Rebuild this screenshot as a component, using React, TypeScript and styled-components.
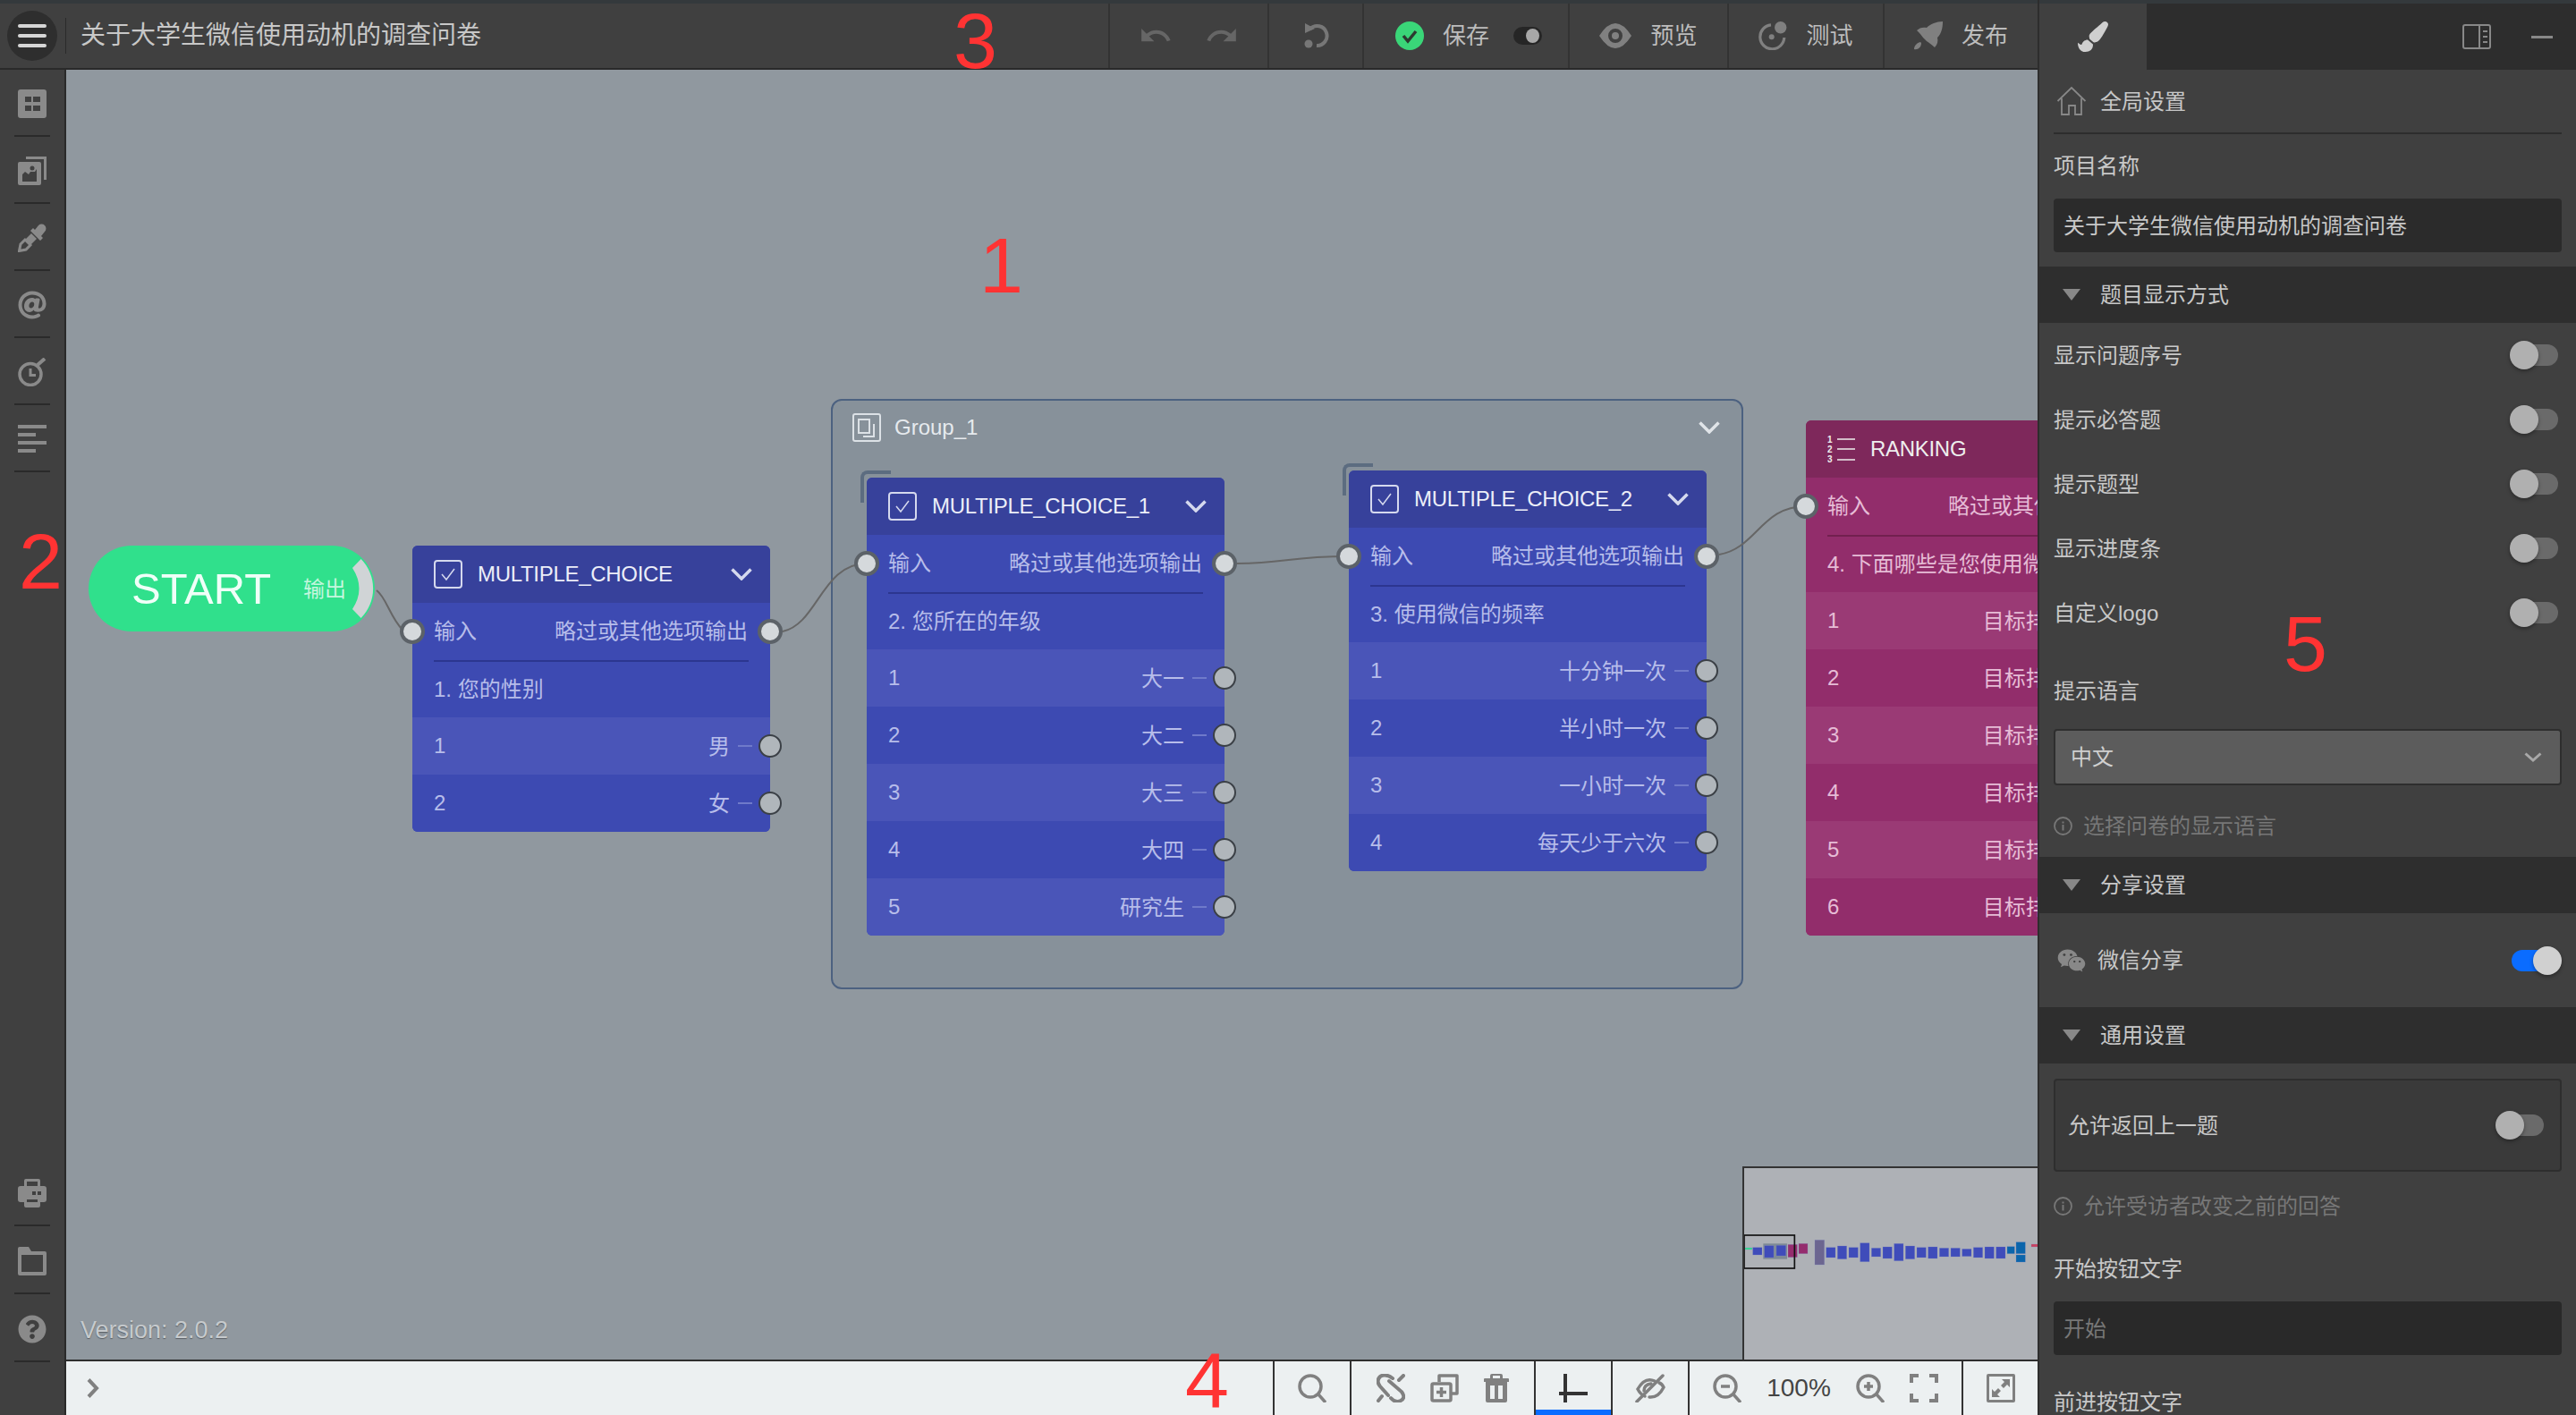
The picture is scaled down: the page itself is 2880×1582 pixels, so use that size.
import React from "react";
import styled, { createGlobalStyle } from "styled-components";
import { FaAt, FaQuestionCircle, FaPaintBrush, FaWeixin } from "react-icons/fa";
import { MdUndo, MdRedo } from "react-icons/md";

const Global = createGlobalStyle`
  html, body { margin: 0; padding: 0; overflow: hidden; background: #404040; }
  * { box-sizing: border-box; }
  #root { width: 2880px; height: 1582px; font-family: "Liberation Sans", "Noto Sans CJK SC", sans-serif; }
`;

const Shell = styled.div`
  position: relative;
  display: flex;
  width: 2880px;
  height: 1582px;
  overflow: hidden;
`;
const Left = styled.div`
  display: flex;
  flex-direction: column;
  width: 2278px;
  flex: none;
`;
const TopBar = styled.header`
  display: flex;
  align-items: stretch;
  height: 78px;
  flex: none;
  background: #404040;
  border-top: 4px solid #34393c;
  border-bottom: 2px solid #2a2a2a;
`;
const MenuButton = styled.div`
  width: 56px;
  height: 56px;
  margin: 8px 0 0 8px;
  border-radius: 50%;
  background: #2e2e2e;
  display: flex;
  flex-direction: column;
  align-items: center;
  justify-content: center;
  gap: 7px;
  flex: none;
`;
const MenuLine = styled.span`
  width: 32px;
  height: 4px;
  border-radius: 2px;
  background: #d6d6d6;
`;
const TitleDivider = styled.span`
  width: 1px;
  height: 40px;
  margin: 16px 0 0 9px;
  background: #2a2a2a;
  flex: none;
`;
const Title = styled.div`
  flex: 1;
  margin-left: 16px;
  font-size: 28px;
  line-height: 72px;
  color: #c8c8c8;
`;
const ToolSection = styled.div<{ $w: number; $offset?: number }>`
  width: ${(p) => p.$w}px;
  padding-left: ${(p) => p.$offset ?? 0}px;
  flex: none;
  display: flex;
  align-items: center;
  justify-content: center;
  border-left: 2px solid #333;
`;
const ToolIcons = styled.div<{ $gap: number }>`
  display: flex;
  align-items: center;
  gap: ${(p) => p.$gap}px;
`;
const ToolLabel = styled.span`
  font-size: 26px;
  line-height: 32px;
  color: #bcbcbc;
`;
const MiniSwitch = styled.span`
  position: relative;
  display: block;
  width: 32px;
  height: 20px;
  border-radius: 10px;
  background: #262626;
  margin-left: 6px;
  &::after {
    content: "";
    position: absolute;
    right: 3px;
    top: 2px;
    width: 15px;
    height: 16px;
    border-radius: 50%;
    background: #a8a8a8;
  }
`;

const Middle = styled.div`
  flex: 1;
  display: flex;
  min-height: 0;
`;
const Sidebar = styled.nav`
  width: 74px;
  flex: none;
  display: flex;
  flex-direction: column;
  align-items: center;
  background: #404040;
  border-right: 2px solid #2a2a2a;
  color: #8a8a8a;
`;
const SideItem = styled.div`
  width: 40px;
  padding: 22px 0 19px;
  border-bottom: 2px solid #2a2a2a;
  display: flex;
  justify-content: center;
  svg { display: block; }
`;
const SideBottom = styled.div`
  margin-top: auto;
  padding-bottom: 59px;
  ${SideItem} { padding-top: 23px; }
`;
const Workspace = styled.div`
  flex: 1;
  display: flex;
  flex-direction: column;
  min-width: 0;
`;
const Canvas = styled.main`
  position: relative;
  flex: 1;
  overflow: hidden;
  background: #90989f;
`;
const Wires = styled.svg`
  position: absolute;
  left: 0;
  top: 0;
  z-index: 2;
  pointer-events: none;
`;
const GroupBox = styled.section`
  position: absolute;
  left: 855px;
  top: 368px;
  width: 1020px;
  height: 660px;
  border: 2px solid #4c6180;
  border-radius: 12px;
  background: #87919a;
  z-index: 1;
`;
const GroupHead = styled.div`
  display: flex;
  align-items: center;
  gap: 15px;
  padding: 14px 24px 0 22px;
  font-size: 24px;
  line-height: 32px;
  color: #e6eaee;
`;
const PushRight = styled.span`
  margin-left: auto;
  display: flex;
`;
const StartNode = styled.div`
  position: absolute;
  left: 25px;
  top: 532px;
  width: 320px;
  height: 96px;
  border-radius: 48px;
  background: #30e08c;
  z-index: 3;
  display: flex;
  align-items: center;
  padding-left: 48px;
`;
const StartText = styled.span`
  font-size: 49px;
  line-height: 96px;
  color: #effff8;
`;
const StartOut = styled.span`
  margin-left: 36px;
  padding-bottom: 4px;
  font-size: 24px;
  color: #c4f6de;
`;
const StartArc = styled.svg`
  position: absolute;
  left: 0;
  top: 0;
`;

const tones = {
  blue: { head: "#37419b", body: "#3d4ab2", alt: "#4a55b8", line: "#2c3690", text: "#b7bdea", title: "#eceef8", dash: "#6f7aca" },
  pink: { head: "#7e285b", body: "#922d6b", alt: "#9a3a75", line: "#72204f", text: "#e6bcd6", title: "#eeeeee", dash: "#c47fa8" },
};
type Tone = keyof typeof tones;

const NodeCard = styled.article<{ $x: number; $y: number; $tone: Tone; $bracket?: boolean }>`
  position: absolute;
  left: ${(p) => p.$x}px;
  top: ${(p) => p.$y}px;
  width: 400px;
  z-index: 3;
  border-radius: 6px;
  background: ${(p) => tones[p.$tone].body};
  color: ${(p) => tones[p.$tone].text};
  font-size: 24px;
  &::before {
    content: ${(p) => (p.$bracket ? '""' : "none")};
    position: absolute;
    left: -7px;
    top: -8px;
    width: 30px;
    height: 32px;
    border-top: 4px solid #5c6c80;
    border-left: 4px solid #5c6c80;
    border-top-left-radius: 8px;
  }
`;
const NodeHead = styled.div<{ $tone: Tone }>`
  position: relative;
  display: flex;
  align-items: center;
  gap: 17px;
  height: 64px;
  padding: 0 20px 0 24px;
  border-radius: 6px 6px 0 0;
  background: ${(p) => tones[p.$tone].head};
  color: ${(p) => tones[p.$tone].title};
  letter-spacing: -0.3px;
`;
const PortRow = styled.div`
  position: relative;
  display: flex;
  align-items: center;
  justify-content: space-between;
  height: 64px;
  padding: 0 25px 5px 24px;
`;
const Rule = styled.div<{ $tone: Tone }>`
  height: 2px;
  margin: 0 24px;
  background: ${(p) => tones[p.$tone].line};
`;
const Question = styled.div`
  height: 62px;
  padding: 0 0 6px 24px;
  display: flex;
  align-items: center;
  white-space: nowrap;
`;
const OptionRow = styled.div<{ $tone: Tone; $alt: boolean }>`
  position: relative;
  display: flex;
  align-items: center;
  justify-content: space-between;
  height: 64px;
  padding: 0 20px 0 24px;
  background: ${(p) => (p.$alt ? tones[p.$tone].alt : tones[p.$tone].body)};
  &:last-child { border-radius: 0 0 6px 6px; }
`;
const OptionEnd = styled.span`
  display: flex;
  align-items: center;
  gap: 9px;
`;
const Lift = styled.span`
  display: block;
  padding-bottom: 4px;
`;
const Dash = styled.i<{ $tone: Tone }>`
  display: block;
  width: 16px;
  height: 2px;
  background: ${(p) => tones[p.$tone].dash};
`;
const BigPort = styled.span<{ $side: "left" | "right" }>`
  position: absolute;
  ${(p) => p.$side}: -14px;
  top: 18px;
  width: 28px;
  height: 28px;
  border-radius: 50%;
  background: #d5d9dc;
  border: 4px solid #5c6268;
`;
const SmallPort = styled.span`
  position: absolute;
  right: -13px;
  top: 19px;
  width: 26px;
  height: 26px;
  border-radius: 50%;
  background: #b0b6bb;
  border: 2px solid #3b4046;
`;
const Version = styled.div`
  position: absolute;
  left: 16px;
  bottom: 17px;
  font-size: 27px;
  line-height: 32px;
  color: #c6cacd;
  text-shadow: 0 1px 1px #5a5f64;
  z-index: 3;
`;
const MiniMap = styled.aside`
  position: absolute;
  right: 0;
  bottom: 0;
  width: 330px;
  height: 216px;
  border-left: 2px solid #333;
  border-top: 2px solid #333;
  background: #aeb1b6;
  z-index: 4;
  svg { display: block; }
`;
const BottomBar = styled.footer`
  height: 62px;
  flex: none;
  display: flex;
  align-items: stretch;
  background: #ecf0f1;
  border-top: 2px solid #2e2e2e;
  color: #808080;
`;
const Collapse = styled.div`
  flex: 1;
  display: flex;
  align-items: center;
  padding-left: 23px;
`;
const BottomSection = styled.div<{ $w: number; $active?: boolean }>`
  position: relative;
  width: ${(p) => p.$w}px;
  flex: none;
  display: flex;
  align-items: center;
  justify-content: center;
  gap: 28px;
  border-left: 2px solid #333;
  &::after {
    content: ${(p) => (p.$active ? '""' : "none")};
    position: absolute;
    left: 0;
    right: 0;
    bottom: 0;
    height: 6px;
    background: #0a6cff;
  }
`;
const ZoomValue = styled.span`
  font-size: 28px;
  line-height: 32px;
  color: #444;
`;

const Panel = styled.aside`
  width: 602px;
  flex: none;
  background: #404040;
  border-left: 2px solid #2d2d2d;
  color: #c8c8c8;
  font-size: 24px;
  overflow: hidden;
`;
const PanelTabs = styled.div`
  height: 78px;
  display: flex;
  align-items: center;
  background: #2d2d2d;
  border-top: 4px solid #34393c;
  padding-right: 26px;
`;
const ActiveTab = styled.div`
  width: 120px;
  height: 74px;
  background: #404040;
  display: flex;
  align-items: center;
  justify-content: center;
  color: #cfcfcf;
`;
const TabTools = styled.div`
  margin-left: auto;
  display: flex;
  align-items: center;
  gap: 45px;
  color: #888;
`;
const Minimize = styled.span`
  display: block;
  width: 24px;
  height: 3px;
  background: #888;
`;
const PanelBody = styled.div`
  padding: 0 16px;
`;
const HomeRow = styled.div`
  height: 72px;
  display: flex;
  align-items: center;
  gap: 16px;
  padding-left: 4px;
  border-bottom: 2px solid #2d2d2d;
  color: #888;
`;
const LightText = styled(Lift)`
  color: #c8c8c8;
`;
const FieldLabel = styled.div<{ $top: number; $bottom: number }>`
  height: 36px;
  margin: ${(p) => p.$top - 2}px 0 ${(p) => p.$bottom + 2}px;
  display: flex;
  align-items: center;
`;
const TextField = styled.div<{ $muted?: boolean }>`
  height: 60px;
  padding: 0 0 4px 11px;
  border-radius: 4px;
  background: ${(p) => (p.$muted ? "#292929" : "#2b2b2b")};
  color: ${(p) => (p.$muted ? "#777" : "#c8c8c8")};
  display: flex;
  align-items: center;
`;
const SectionHead = styled.div<{ $top?: number }>`
  height: 63px;
  margin: ${(p) => p.$top ?? 0}px -16px 0;
  padding-left: 26px;
  display: flex;
  align-items: center;
  gap: 22px;
  background: #2e2e2e;
`;
const Triangle = styled.span`
  width: 0;
  height: 0;
  border-left: 10px solid transparent;
  border-right: 10px solid transparent;
  border-top: 13px solid #888;
`;
const ToggleRow = styled.div`
  height: 72px;
  display: flex;
  align-items: center;
  justify-content: space-between;
  padding-right: 4px;
`;
const Toggle = styled.span<{ $on?: boolean }>`
  position: relative;
  display: block;
  width: ${(p) => (p.$on ? 56 : 54)}px;
  height: 32px;
  flex: none;
  &::before {
    content: "";
    position: absolute;
    left: ${(p) => (p.$on ? 0 : 4)}px;
    right: ${(p) => (p.$on ? 8 : 0)}px;
    top: 4px;
    height: 24px;
    border-radius: 12px;
    background: ${(p) => (p.$on ? "#0a6cff" : "#6a6a6a")};
  }
  &::after {
    content: "";
    position: absolute;
    ${(p) => (p.$on ? "right" : "left")}: 0;
    top: 0;
    width: 32px;
    height: 32px;
    border-radius: 50%;
    background: ${(p) => (p.$on ? "#d0d0d0" : "#b0b0b0")};
    box-shadow: 0 2px 4px rgba(0, 0, 0, 0.35);
  }
`;
const SelectBox = styled.div`
  height: 63px;
  padding: 0 20px 0 17px;
  border: 2px solid #2e2e2e;
  border-radius: 4px;
  background: #5c5c5c;
  display: flex;
  align-items: center;
  justify-content: space-between;
  color: #cfcfcf;
`;
const HelpText = styled.div<{ $top: number; $bottom?: number }>`
  height: 30px;
  margin: ${(p) => p.$top}px 0 ${(p) => p.$bottom ?? 0}px;
  display: flex;
  align-items: center;
  gap: 12px;
  color: #777;
`;
const ShareRow = styled.div`
  height: 105px;
  display: flex;
  align-items: center;
  padding-left: 4px;
  gap: 13px;
  color: #888;
`;
const AllowBox = styled.div`
  height: 104px;
  margin-top: 17px;
  padding: 0 18px 0 14px;
  border: 2px solid #2e2e2e;
  border-radius: 4px;
  background: #3a3a3a;
  display: flex;
  align-items: center;
  justify-content: space-between;
`;
const Annotation = styled.span<{ $x: number; $y: number }>`
  position: absolute;
  left: ${(p) => p.$x}px;
  top: ${(p) => p.$y}px;
  font-size: 88px;
  line-height: 88px;
  color: #ff3333;
  z-index: 10;
`;

const GridIcon = () => (
  <svg width="32" height="32" viewBox="0 0 32 32" fill="currentColor">
    <path fillRule="evenodd" d="M3 0h26a3 3 0 0 1 3 3v26a3 3 0 0 1-3 3H3a3 3 0 0 1-3-3V3a3 3 0 0 1 3-3z M8 8h7v6H8z M17 8h8v6h-8z M8 18h7v6H8z M17 18h8v6h-8z" />
  </svg>
);
const GalleryIcon = () => (
  <svg width="32" height="32" viewBox="0 0 32 32" fill="currentColor">
    <path d="M9 1.5H30.5V26" fill="none" stroke="currentColor" strokeWidth="3" />
    <path fillRule="evenodd" d="M2 6h22a2 2 0 0 1 2 2v22a2 2 0 0 1-2 2H2a2 2 0 0 1-2-2V8a2 2 0 0 1 2-2z M5 28h16V14l-2 3h-5l-2 3-4-3-3 3z" />
    <circle cx="16" cy="13" r="2.5" fill="#404040" />
  </svg>
);
const DropperIcon = () => (
  <svg width="32" height="32" viewBox="0 0 32 32" fill="currentColor">
    <path d="M19 7l4-5a4.800 4.800 0 0 1 7 7l-4 5 2 2-3 3L14 8l3-3z" />
    <path d="M15 11L7 19L13 25L21 17z" />
    <path d="M9 17L3 23L1.500 30.500L9 29L15 23" fill="none" stroke="currentColor" strokeWidth="3" />
  </svg>
);
const StopwatchIcon = () => (
  <svg width="32" height="32" viewBox="0 0 32 32" fill="none" stroke="currentColor">
    <circle cx="14" cy="18.5" r="12" strokeWidth="3.5" />
    <path d="M14 12v7.5h6" strokeWidth="3" />
    <path d="M22 8l8-7" strokeWidth="4" />
  </svg>
);
const BarsIcon = () => (
  <svg width="32" height="32" viewBox="0 0 32 32" fill="currentColor">
    <path d="M0 0h32v4H0z M0 9h20v4H0z M0 18h32v4H0z M0 27h20v4H0z" />
  </svg>
);
const PrinterIcon = () => (
  <svg width="32" height="32" viewBox="0 0 32 32" fill="currentColor">
    <path fillRule="evenodd" d="M7 2a2 2 0 0 1 2-2h14a2 2 0 0 1 2 2v6h4a3 3 0 0 1 3 3v12a3 3 0 0 1-3 3h-4v4a2 2 0 0 1-2 2H9a2 2 0 0 1-2-2v-4H3a3 3 0 0 1-3-3V11a3 3 0 0 1 3-3h4z M10 3v5h12V3z M16 14h4v4h-4z M22 14h4v4h-4z M10 23v3h12v-3z" />
  </svg>
);
const FolderIcon = () => (
  <svg width="32" height="32" viewBox="0 0 32 32" fill="currentColor">
    <path fillRule="evenodd" d="M0 2a2 2 0 0 1 2-2h10l3 5h15a2 2 0 0 1 2 2v23a2 2 0 0 1-2 2H2a2 2 0 0 1-2-2z M4 9v19h24V9z" />
  </svg>
);
const CheckBoxIcon = () => (
  <svg width="32" height="32" viewBox="0 0 32 32" fill="none" stroke="#d5d9ee">
    <rect x="1" y="1" width="30" height="30" rx="3" strokeWidth="2" />
    <path d="M9 16l5 6 9-12" strokeWidth="1.5" />
  </svg>
);
const GroupIcon = () => (
  <svg width="32" height="32" viewBox="0 0 32 32" fill="none" stroke="#dce1e6" strokeWidth="2">
    <rect x="1" y="1" width="30" height="30" rx="2" />
    <rect x="7" y="7" width="12" height="15" />
    <path d="M24 12v14H12" />
  </svg>
);
const RankIcon = () => (
  <svg width="31" height="30" viewBox="0 0 31 30" fill="none" stroke="#eeeeee" strokeWidth="1.5">
    <path d="M11 4h20M11 15h20M11 27h20" />
    <g fill="#eeeeee" stroke="none" fontFamily="Liberation Sans, sans-serif" fontSize="10" fontWeight="700">
      <text x="0" y="8">1</text>
      <text x="0" y="19">2</text>
      <text x="0" y="30">3</text>
    </g>
  </svg>
);
const Chevron = ({ color = "#d5d9ee", w = 24, h = 14, sw = 3.5 }: { color?: string; w?: number; h?: number; sw?: number }) => (
  <svg width={w} height={h} viewBox={`0 0 ${w} ${h}`} fill="none" stroke={color} strokeWidth={sw}>
    <path d={`M1.5 1.5L${w / 2} ${h - 2}L${w - 1.5} 1.5`} />
  </svg>
);
const ResetIcon = () => (
  <svg width="30" height="28" viewBox="0 0 30 28" fill="#777">
    <path d="M9 6A11 11 0 1 1 16 25" fill="none" stroke="#777" strokeWidth="4" />
    <path d="M3 0v11l11-5z" />
    <circle cx="7" cy="23" r="4.5" />
  </svg>
);
const SavedIcon = () => (
  <svg width="32" height="32" viewBox="0 0 32 32">
    <circle cx="16" cy="16" r="16" fill="#3ad678" />
    <path d="M9 16l5 6 9-11" fill="none" stroke="#2c3a30" strokeWidth="3.5" />
  </svg>
);
const EyeIcon = () => (
  <svg width="36" height="28" viewBox="0 0 36 28" fill="#808080">
    <path fillRule="evenodd" d="M0 14Q18-14 36 14Q18 42 0 14z M18 6a8 8 0 1 0 0 16a8 8 0 1 0 0-16z" />
    <circle cx="18" cy="14" r="4" />
  </svg>
);
const TestIcon = () => (
  <svg width="32" height="32" viewBox="0 0 32 32" fill="#808080">
    <circle cx="24.700" cy="6.700" r="6.700" />
    <path d="M14 3.800A13.500 13.500 0 1 0 28.800 18" fill="none" stroke="#808080" strokeWidth="3.200" />
    <circle cx="14.700" cy="17.300" r="3" />
  </svg>
);
const RocketIcon = () => (
  <svg width="32" height="32" viewBox="0 0 32 32" fill="#808080">
    <path d="M32 0C32 8 30 14 26 18C27 22 26 26 23 29C20 26 17 24 14 22L10 18C8 15 6 13 3 10C6 7 10 6 14 7C18 3 25 0 32 0z" />
    <path d="M7 23C3 24 0 27 0 31C4 32 8 29 8 24z" />
  </svg>
);
const SearchIcon = ({ inner }: { inner?: "plus" | "minus" }) => (
  <svg width="32" height="32" viewBox="0 0 32 32" fill="none" stroke="#808080" strokeWidth="3.5">
    <circle cx="14" cy="14" r="12" />
    <path d="M23 23l8 9" />
    {inner && <path d={inner === "plus" ? "M9 14h10M14 9v10" : "M9 14h10"} />}
  </svg>
);
const UnlinkIcon = () => (
  <svg width="32" height="32" viewBox="0 0 32 32" fill="none" stroke="#808080" strokeWidth="4" strokeLinecap="round">
    <path d="M18 5Q10-1 4 3Q-1 8 4 14L13 24" />
    <path d="M14 8L28 20Q33 27 27 30Q21 33 16 27" />
    <path d="M25 7L30 2M2 30L6 25" />
  </svg>
);
const CopyPlusIcon = () => (
  <svg width="32" height="32" viewBox="0 0 32 32" fill="none" stroke="#808080" strokeWidth="3.5">
    <path d="M10 9V2H30V22H24" strokeLinejoin="round" />
    <rect x="2" y="11" width="21" height="19" rx="1.500" />
    <path d="M7 20.500H18M12.500 15V26" />
  </svg>
);
const TrashIcon = () => (
  <svg width="28" height="32" viewBox="0 0 28 32" fill="#808080">
    <path fillRule="evenodd" d="M9 0h10a2 2 0 0 1 2 2v3h6a1 1 0 0 1 1 1v3H0V6a1 1 0 0 1 1-1h6V2a2 2 0 0 1 2-2z M10 2v3h8V2z" />
    <path fillRule="evenodd" d="M2 9h24v21a2 2 0 0 1-2 2H4a2 2 0 0 1-2-2z M7 13v15h5V13z M16 13v15h5V13z" />
  </svg>
);
const AxisIcon = () => (
  <svg width="32" height="32" viewBox="0 0 32 32" fill="#333">
    <path d="M5 0h4v32H5z M0 20h32v4H0z" />
  </svg>
);
const EyeOffIcon = () => (
  <svg width="34" height="32" viewBox="0 0 34 32" fill="none" stroke="#808080" strokeWidth="3.5" strokeLinecap="round">
    <path d="M22 8Q11 3 3 17Q6 23 11 25" />
    <path d="M16 26Q26 27 32 15Q30 11 27 10" />
    <path d="M2 31L31 2" />
    <path d="M10 19Q10 12 18 11" />
  </svg>
);
const FullscreenIcon = () => (
  <svg width="32" height="32" viewBox="0 0 32 32" fill="none" stroke="#808080" strokeWidth="4">
    <path d="M2 10V2h8M22 2h8v8M30 22v8h-8M10 30H2v-8" />
  </svg>
);
const ExpandIcon = () => (
  <svg width="32" height="32" viewBox="0 0 32 32" fill="#808080">
    <path fillRule="evenodd" d="M2 0h28a2 2 0 0 1 2 2v28a2 2 0 0 1-2 2H2a2 2 0 0 1-2-2V2a2 2 0 0 1 2-2z M3 3v26h26V3z" />
    <path d="M17 6h9v9l-3-3-4 4-3-3 4-4z M15 26H6v-9l3 3 4-4 3 3-4 4z" />
  </svg>
);
const ArrowRight = () => (
  <svg width="14" height="22" viewBox="0 0 14 22" fill="none" stroke="#808080" strokeWidth="4">
    <path d="M2 1.500l9 9.500-9 9.500" />
  </svg>
);
const LayoutIcon = () => (
  <svg width="32" height="28" viewBox="0 0 32 28" fill="none" stroke="#888" strokeWidth="2">
    <rect x="1" y="1" width="30" height="26" rx="2" />
    <path d="M19 1v26M23 8h5M23 14h5M23 20h5" />
  </svg>
);
const HomeIcon = () => (
  <svg width="32" height="32" viewBox="0 0 32 32" fill="none" stroke="#888" strokeWidth="1.800">
    <path d="M0.500 16L16 1l15.500 15" />
    <path d="M5 13v18h8V21h7v10h7V13" />
  </svg>
);
const InfoIcon = () => (
  <svg width="21" height="21" viewBox="0 0 21 21" fill="none" stroke="#777" strokeWidth="1.800">
    <circle cx="10.500" cy="10.500" r="9.500" />
    <path d="M10.500 9v6.500M10.500 5.500v2" strokeWidth="2" />
  </svg>
);

type NodeData = { x: number; y: number; title: string; question: string; options: string[]; tone: Tone; bracket?: boolean; icon?: "rank" };
const nodes: NodeData[] = [
  { x: 387, y: 532, title: "MULTIPLE_CHOICE", question: "1. 您的性别", options: ["男", "女"], tone: "blue" },
  { x: 895, y: 456, title: "MULTIPLE_CHOICE_1", question: "2. 您所在的年级", options: ["大一", "大二", "大三", "大四", "研究生"], tone: "blue", bracket: true },
  { x: 1434, y: 448, title: "MULTIPLE_CHOICE_2", question: "3. 使用微信的频率", options: ["十分钟一次", "半小时一次", "一小时一次", "每天少于六次"], tone: "blue", bracket: true },
  { x: 1945, y: 392, title: "RANKING", question: "4. 下面哪些是您使用微信的动机", options: ["目标排序项目1", "目标排序项目2", "目标排序项目3", "目标排序项目4", "目标排序项目5", "目标排序项目6"], tone: "pink", icon: "rank" },
];

const Node = ({ n }: { n: NodeData }) => (
  <NodeCard $x={n.x} $y={n.y} $tone={n.tone} $bracket={n.bracket}>
    <NodeHead $tone={n.tone}>
      {n.icon === "rank" ? <RankIcon /> : <CheckBoxIcon />}
      <span>{n.title}</span>
      {n.icon !== "rank" && (
        <PushRight>
          <Chevron />
        </PushRight>
      )}
    </NodeHead>
    <PortRow>
      <BigPort $side="left" />
      <span>输入</span>
      <span>略过或其他选项输出</span>
      <BigPort $side="right" />
    </PortRow>
    <Rule $tone={n.tone} />
    <Question>{n.question}</Question>
    {n.options.map((o, i) => (
      <OptionRow key={o} $tone={n.tone} $alt={i % 2 === 0}>
        <span>{i + 1}</span>
        <OptionEnd>
          <Lift>{o}</Lift>
          <Dash $tone={n.tone} />
        </OptionEnd>
        <SmallPort />
      </OptionRow>
    ))}
  </NodeCard>
);

const B = "#3f4cba";
const miniRects: [number, number, number, number, string][] = [
  [63, 315, 24, 6, "#30e08c"],
  [89, 314, 31, 25, B],
  [124, 301, 80, 52, "#7e8a96"],
  [128, 308, 31, 40, B],
  [168, 307, 32, 35, B],
  [207, 304, 31, 43, "#952c6e"],
  [243, 301, 30, 34, "#952c6e"],
  [297, 289, 32, 83, "#6c6690"],
  [335, 314, 31, 34, B],
  [373, 309, 31, 44, B],
  [411, 314, 31, 34, B],
  [449, 299, 31, 63, B],
  [487, 316, 31, 29, B],
  [525, 312, 31, 39, B],
  [563, 301, 31, 58, B],
  [601, 309, 31, 44, B],
  [639, 314, 31, 34, B],
  [677, 312, 31, 39, B],
  [715, 316, 31, 29, B],
  [753, 316, 31, 29, B],
  [791, 319, 31, 25, B],
  [829, 314, 31, 34, B],
  [867, 312, 31, 39, B],
  [905, 312, 31, 39, B],
  [942, 311, 25, 24, "#0b65ab"],
  [972, 296, 31, 39, "#0b65ab"],
  [972, 339, 31, 24, "#0b65ab"],
  [1023, 303, 24, 9, "#c9415f"],
];

const toggles = ["显示问题序号", "提示必答题", "提示题型", "显示进度条", "自定义logo"];

export default function App() {
  return (
    <Shell>
      <Global />
      <Left>
        <TopBar>
          <MenuButton>
            <MenuLine />
            <MenuLine />
            <MenuLine />
          </MenuButton>
          <TitleDivider />
          <Title>关于大学生微信使用动机的调查问卷</Title>
          <ToolSection $w={178}>
            <ToolIcons $gap={36}>
              <MdUndo size={38} color="#666" />
              <MdRedo size={38} color="#666" />
            </ToolIcons>
          </ToolSection>
          <ToolSection $w={106}>
            <ResetIcon />
          </ToolSection>
          <ToolSection $w={230} $offset={6}>
            <ToolIcons $gap={21}>
              <SavedIcon />
              <ToolLabel>保存</ToolLabel>
              <MiniSwitch />
            </ToolIcons>
          </ToolSection>
          <ToolSection $w={178}>
            <ToolIcons $gap={21}>
              <EyeIcon />
              <ToolLabel>预览</ToolLabel>
            </ToolIcons>
          </ToolSection>
          <ToolSection $w={174}>
            <ToolIcons $gap={21}>
              <TestIcon />
              <ToolLabel>测试</ToolLabel>
            </ToolIcons>
          </ToolSection>
          <ToolSection $w={173}>
            <ToolIcons $gap={21}>
              <RocketIcon />
              <ToolLabel>发布</ToolLabel>
            </ToolIcons>
          </ToolSection>
        </TopBar>
        <Middle>
          <Sidebar>
            <SideItem><GridIcon /></SideItem>
            <SideItem><GalleryIcon /></SideItem>
            <SideItem><DropperIcon /></SideItem>
            <SideItem><FaAt size={32} /></SideItem>
            <SideItem><StopwatchIcon /></SideItem>
            <SideItem><BarsIcon /></SideItem>
            <SideBottom>
              <SideItem><PrinterIcon /></SideItem>
              <SideItem><FolderIcon /></SideItem>
              <SideItem><FaQuestionCircle size={32} /></SideItem>
            </SideBottom>
          </Sidebar>
          <Workspace>
            <Canvas>
              <GroupBox>
                <GroupHead>
                  <GroupIcon />
                  <span>Group_1</span>
                  <PushRight>
                    <Chevron color="#e0e4e8" />
                  </PushRight>
                </GroupHead>
              </GroupBox>
              <Wires width="2204" height="1442" fill="none" stroke="#666" strokeWidth="2">
                <path d="M347 582C358 590 362 612 376 626" />
                <path d="M801 628C840 620 845 552 895 552" />
                <path d="M1309 552C1365 552 1365 544 1434 544" />
                <path d="M1848 542C1890 535 1895 488 1945 488" />
              </Wires>
              <StartNode>
                <StartText>START</StartText>
                <StartOut>输出</StartOut>
                <StartArc width="320" height="96" viewBox="0 0 320 96">
                  <path d="M304.600 15L295 25Q310 48 295 71L304.600 81A47 47 0 0 0 304.600 15Z" fill="#d0d4d6" />
                </StartArc>
              </StartNode>
              {nodes.map((n) => (
                <Node key={n.title} n={n} />
              ))}
              <Version>Version: 2.0.2</Version>
              <MiniMap>
                <svg width="328" height="214" viewBox="60 48 984 642">
                  {miniRects.map(([x, y, w, h, c]) => (
                    <rect key={`${x}-${y}`} x={x} y={y} width={w} height={h} fill={c} stroke={c === "#7e8a96" ? "none" : "#8088c4"} strokeOpacity="0.4" strokeWidth="2" />
                  ))}
                  <rect x="60" y="273" width="169" height="111" fill="none" stroke="#111" strokeWidth="5" />
                </svg>
              </MiniMap>
            </Canvas>
            <BottomBar>
              <Collapse>
                <ArrowRight />
              </Collapse>
              <BottomSection $w={86}>
                <SearchIcon />
              </BottomSection>
              <BottomSection $w={206}>
                <UnlinkIcon />
                <CopyPlusIcon />
                <TrashIcon />
              </BottomSection>
              <BottomSection $w={86} $active>
                <AxisIcon />
              </BottomSection>
              <BottomSection $w={86}>
                <EyeOffIcon />
              </BottomSection>
              <BottomSection $w={306}>
                <SearchIcon inner="minus" />
                <ZoomValue>100%</ZoomValue>
                <SearchIcon inner="plus" />
                <FullscreenIcon />
              </BottomSection>
              <BottomSection $w={85}>
                <ExpandIcon />
              </BottomSection>
            </BottomBar>
          </Workspace>
        </Middle>
      </Left>
      <Panel>
        <PanelTabs>
          <ActiveTab>
            <FaPaintBrush size={34} />
          </ActiveTab>
          <TabTools>
            <LayoutIcon />
            <Minimize />
          </TabTools>
        </PanelTabs>
        <PanelBody>
          <HomeRow>
            <HomeIcon />
            <LightText>全局设置</LightText>
          </HomeRow>
          <FieldLabel $top={17} $bottom={19}>项目名称</FieldLabel>
          <TextField>关于大学生微信使用动机的调查问卷</TextField>
          <SectionHead $top={16}>
            <Triangle />
            <Lift>题目显示方式</Lift>
          </SectionHead>
          {toggles.map((t) => (
            <ToggleRow key={t}>
              <Lift>{t}</Lift>
              <Toggle />
            </ToggleRow>
          ))}
          <FieldLabel $top={33} $bottom={25}>提示语言</FieldLabel>
          <SelectBox>
            <Lift>中文</Lift>
            <Chevron color="#a8a8a8" w={20} h={11} sw={3} />
          </SelectBox>
          <HelpText $top={30}>
            <InfoIcon />
            <Lift>选择问卷的显示语言</Lift>
          </HelpText>
          <SectionHead $top={20}>
            <Triangle />
            <Lift>分享设置</Lift>
          </SectionHead>
          <ShareRow>
            <FaWeixin size={32} />
            <LightText>微信分享</LightText>
            <PushRight>
              <Toggle $on />
            </PushRight>
          </ShareRow>
          <SectionHead>
            <Triangle />
            <Lift>通用设置</Lift>
          </SectionHead>
          <AllowBox>
            <Lift>允许返回上一题</Lift>
            <Toggle />
          </AllowBox>
          <HelpText $top={23}>
            <InfoIcon />
            <Lift>允许受访者改变之前的回答</Lift>
          </HelpText>
          <FieldLabel $top={37} $bottom={19}>开始按钮文字</FieldLabel>
          <TextField $muted>开始</TextField>
          <FieldLabel $top={34} $bottom={0}>前进按钮文字</FieldLabel>
        </PanelBody>
      </Panel>
      <Annotation $x={1095} $y={253}>1</Annotation>
      <Annotation $x={21} $y={584}>2</Annotation>
      <Annotation $x={1066} $y={2}>3</Annotation>
      <Annotation $x={1325} $y={1500}>4</Annotation>
      <Annotation $x={2553} $y={676}>5</Annotation>
    </Shell>
  );
}
